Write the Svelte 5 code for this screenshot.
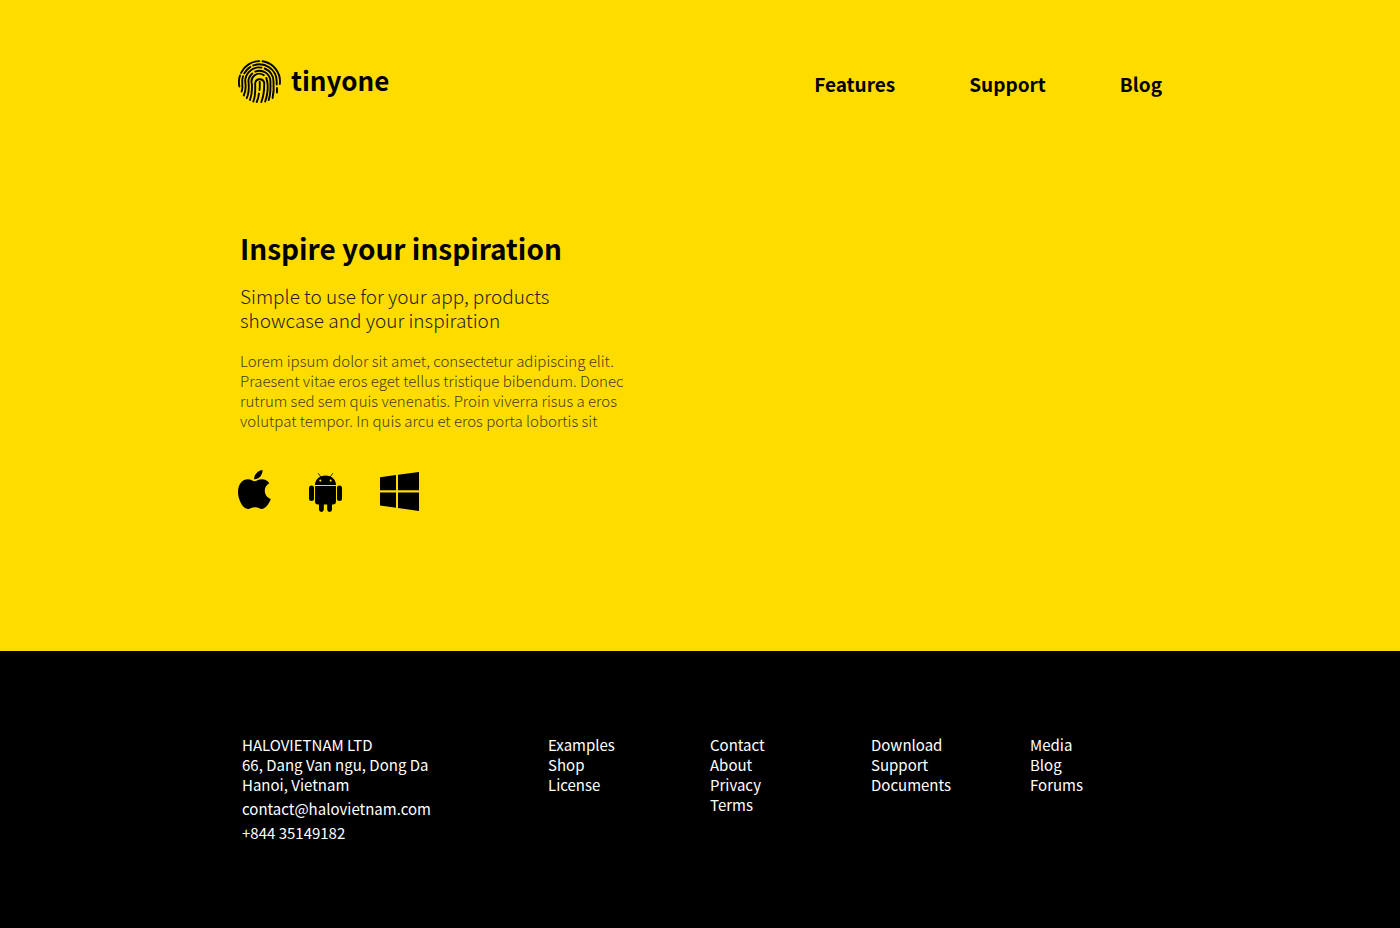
<script>
  const nav = ['Features', 'Support', 'Blog'];
  const columns = [
    ['Examples', 'Shop', 'License'],
    ['Contact', 'About', 'Privacy', 'Terms'],
    ['Download', 'Support', 'Documents'],
    ['Media', 'Blog', 'Forums']
  ];
  const ridges = [
    'M1.4 26.500 A20.400 20.400 0 0 1 2 15.500',
    'M3.100 12.800 A20.400 20.400 0 0 1 21.300 1.100',
    'M24.600 1.300 A20.400 20.400 0 0 1 41.800 24',
    'M3.600 31.500 Q4.900 28 4.300 24 A17.200 17.200 0 0 1 5 16.200',
    'M6.300 13.400 A17.200 17.200 0 0 1 12.400 6.900',
    'M15.200 5.500 A17.200 17.200 0 0 1 38.700 21.500 V24.500',
    'M39 28 V32.500',
    'M5.800 35.500 Q8.200 30 7.500 24 A14 14 0 0 1 23.500 7.600',
    'M26.700 8.500 A14 14 0 0 1 35.500 21.500 Q36.200 31 34.600 38',
    'M8.800 38 Q11.300 32 10.700 24 A10.900 10.900 0 0 1 14.300 13.500',
    'M17.300 11.600 A10.900 10.900 0 0 1 32.400 21.500 Q33 33 30.700 40',
    'M12 40 Q14.500 33 13.900 24 A7.800 7.800 0 0 1 25.800 15.200',
    'M28.300 17.900 Q30.500 24 29.300 33 Q28.500 38 27.200 41.500',
    'M15.300 41.500 Q17.600 36 17.200 24 A4.600 4.600 0 0 1 26.200 22.500 Q26.500 34 23.300 42',
    'M18.700 42 Q20.600 38 20.900 33.500',
    'M21.500 30 Q22 26 21.700 22'
  ];
</script>

<main class="hero">
  <div class="wrap">
    <header>
      <a class="brand" href="#home">
        <svg class="mark" viewBox="0 0 43 43" aria-hidden="true">
          {#each ridges as d}<path {d} />{/each}
        </svg>
        <span>tinyone</span>
      </a>
      <nav aria-label="Main">
        {#each nav as item}<a href="#{item.toLowerCase()}">{item}</a>{/each}
      </nav>
    </header>

    <section class="intro">
      <h1>Inspire your inspiration</h1>
      <p class="lead">Simple to use for your app, products<br />showcase and your inspiration</p>
      <p class="copy">
        Lorem ipsum dolor sit amet, consectetur adipiscing elit.<br />
        Praesent vitae eros eget tellus tristique bibendum. Donec<br />
        rutrum sed sem quis venenatis. Proin viverra risus a eros<br />
        volutpat tempor. In quis arcu et eros porta lobortis sit
      </p>
    </section>

    <div class="platforms">
      <a href="#ios" aria-label="iOS">
        <svg width="33" height="42" viewBox="0 0 33 42">
          <path d="M24.5 0c.3 5-3.8 9.6-8.3 9.3C15.700 4.800 20 .5 24.500 0zM16.500 11.300c1.800 0 4-2 7.500-2 3 0 5.700 1.500 7.300 4-6.800 3.900-5.600 13.100 1.500 15.700-1.600 4.300-5.100 9.700-8.600 9.900-2.700.1-3.600-1.700-7.100-1.700s-4.600 1.700-7.100 1.700C5 38.900 0 29.800 0 22.200 0 13.500 5 9.200 9.800 9.200c3 0 5.200 2.100 6.700 2.100z" />
        </svg>
      </a>
      <a href="#android" aria-label="Android">
        <svg width="33" height="42" viewBox="0 0 33 42">
          <path d="M9.200 3.200l3 4.400M23.800 3.200l-3 4.400" fill="none" stroke="#000" stroke-width=".8" />
          <path fill-rule="evenodd" d="M6 15C6 9.500 10.500 5.500 16.500 5.500S27 9.500 27 15zM11.300 9.500a1.100 1.100 0 1 0 0 2.200 1.100 1.100 0 0 0 0-2.200zM21.700 9.500a1.100 1.100 0 1 0 0 2.200 1.100 1.100 0 0 0 0-2.200z" />
          <path d="M6 16h21v15.500a3 3 0 0 1-3 3h-1v5a2.400 2.400 0 0 1-4.800 0v-5h-3.400v5a2.400 2.400 0 0 1-4.800 0v-5H9a3 3 0 0 1-3-3z" />
          <rect x="0" y="15.500" width="5" height="15.500" rx="2.500" />
          <rect x="28" y="15.500" width="5" height="15.500" rx="2.500" />
        </svg>
      </a>
      <a href="#windows" aria-label="Windows">
        <svg width="39" height="42" viewBox="0 0 39 42">
          <path d="M0 7.200L16 5v15.300H0zM18 4.700L39 2v18.300H18zM0 22.500h16v15.300L0 35.400zM18 22.500h21V41l-21-2.900z" />
        </svg>
      </a>
    </div>
  </div>
</main>

<footer>
  <div class="wrap foot">
    <address>
      HALOVIETNAM LTD<br />66, Dang Van ngu, Dong Da<br />Hanoi, Vietnam
      <a href="mailto:contact@halovietnam.com">contact@halovietnam.com</a>
      <a href="tel:+84435149182">+844 35149182</a>
    </address>
    {#each columns as links}
      <ul>
        {#each links as link}<li><a href="#{link.toLowerCase()}">{link}</a></li>{/each}
      </ul>
    {/each}
  </div>
</footer>

<style>
  :global(body) {
    margin: 0;
    background: #000;
    font-family: 'Noto Sans CJK SC', 'Noto Sans', sans-serif;
  }
  a {
    color: inherit;
    text-decoration: none;
  }
  .wrap {
    max-width: 924px;
    margin: 0 auto;
  }
  .hero {
    background: #ffdc00;
    color: #000;
    padding: 60px 24px 139px;
  }
  header {
    display: flex;
    justify-content: space-between;
    align-items: center;
  }
  .brand {
    display: flex;
    align-items: center;
    gap: 10px;
    font-size: 26px;
    line-height: 39px;
    font-weight: 700;
  }
  .brand span {
    padding-bottom: 4px;
  }
  .mark {
    width: 43px;
    height: 43px;
    fill: none;
    stroke: #000;
    stroke-width: 1.9;
    stroke-linecap: round;
  }
  nav {
    display: flex;
    gap: 74px;
    padding-top: 5px;
    font-size: 19px;
    line-height: 32px;
    font-weight: 700;
  }
  .intro {
    padding: 125px 2px 0;
  }
  h1 {
    margin: 0;
    font-size: 28px;
    line-height: 40px;
    font-weight: 700;
  }
  .lead {
    margin: 16px 0 0;
    font-size: 19px;
    line-height: 24px;
    font-weight: 300;
    color: #222;
  }
  .copy {
    margin: 19px 0 0;
    font-size: 15px;
    line-height: 20px;
    font-weight: 300;
    color: #443c18;
  }
  .platforms {
    display: flex;
    gap: 38px;
    margin-top: 39px;
  }
  .platforms a,
  .platforms svg {
    display: block;
  }
  footer {
    background: #000;
    color: #fff;
    padding: 84px 24px;
    font-size: 15px;
    line-height: 20px;
  }
  .foot {
    display: grid;
    grid-template-columns: 306fr 162fr 161fr 159fr 132fr;
    padding-left: 4px;
    box-sizing: border-box;
  }
  address {
    font-style: normal;
  }
  address a {
    display: block;
    margin-top: 4px;
  }
  ul {
    margin: 0;
    padding: 0;
    list-style: none;
  }
</style>
